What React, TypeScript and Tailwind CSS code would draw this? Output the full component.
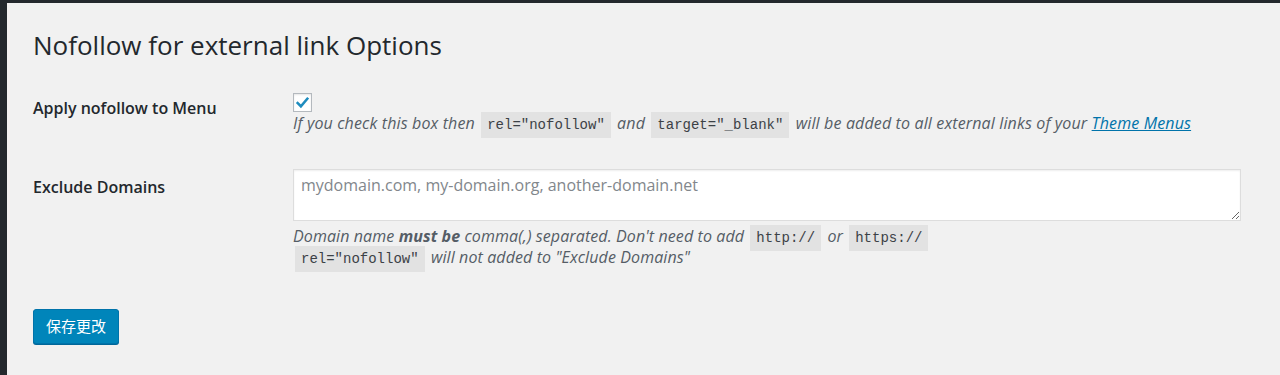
import React from 'react';

const Code = ({ children }: { children: React.ReactNode }) => (
  <code className="bg-[#e2e2e2] px-[6px] py-[5px] mx-[2px] not-italic tracking-normal text-[14px] leading-[16px] text-[#3c4146] font-['Liberation_Mono',monospace]">
    {children}
  </code>
);

const App = () => {
  return (
    <div className="min-h-screen bg-[#23282d] pt-[3px] pl-[7px] font-['Open_Sans',sans-serif]">
      <div className="min-h-[372px] bg-[#f1f1f1] pl-[26px] pr-[39px]">
        {/* Title */}
        <h1 className="pt-[26px] text-[26px] leading-[32px] font-normal text-[#23282d]">
          Nofollow for external link Options
        </h1>

        {/* Apply nofollow row */}
        <div className="flex mt-[32px]">
          <div className="w-[260px] shrink-0 pt-[5px] text-[16px] leading-[20px] font-semibold text-[#23282d]">
            Apply nofollow to Menu
          </div>
          <div className="flex-1">
            <div className="w-[19px] h-[19px] bg-white border border-[#b4b9be] shadow-[inset_0_1px_2px_rgba(0,0,0,0.1)] flex items-center justify-center">
              <svg width="15" height="15" viewBox="0 0 14 14" fill="none">
                <path d="M2.5 7.5 L5.5 10.5 L11.5 3.5" stroke="#1e8cbe" strokeWidth="2.4" strokeLinecap="square" />
              </svg>
            </div>
            <p className="italic text-[16px] leading-[22px] tracking-[0.14px] text-[#555d66]">
              If you check this box then <Code>rel="nofollow"</Code> and <Code>target="_blank"</Code> will be added to all external links of your{' '}
              <a href="#" className="text-[#0073aa] underline">Theme Menus</a>
            </p>
          </div>
        </div>

        {/* Exclude domains row */}
        <div className="flex mt-[35px]">
          <div className="w-[260px] shrink-0 pt-[8px] text-[16px] leading-[20px] font-semibold text-[#23282d]">
            Exclude Domains
          </div>
          <div className="flex-1">
            <textarea
              className="block w-full h-[52px] bg-white border border-[#ddd] shadow-[inset_0_1px_2px_rgba(0,0,0,0.07)] px-[7px] py-[4px] text-[16px] leading-[22px] text-[#32373c] placeholder:text-[#82878c] outline-none"
              placeholder="mydomain.com, my-domain.org, another-domain.net"
            />
            <p className="mt-[5px] italic text-[16px] leading-[21px] tracking-[0.1px] text-[#555d66]">
              Domain name <b className="font-bold">must be</b> comma(,) separated. Don't need to add <Code>http://</Code> or <Code>https://</Code>
              <br />
              <Code>rel="nofollow"</Code> will not added to "Exclude Domains"
            </p>
          </div>
        </div>

        {/* Submit */}
        <button className="mt-[41px] h-[35px] px-[12px] bg-[#0085ba] border border-[#0073aa] rounded-[3px] shadow-[0_1px_0_#006799] text-white text-[15px] font-['Noto_Sans_CJK_SC',sans-serif]">
          保存更改
        </button>
      </div>
    </div>
  );
};

export default App;
